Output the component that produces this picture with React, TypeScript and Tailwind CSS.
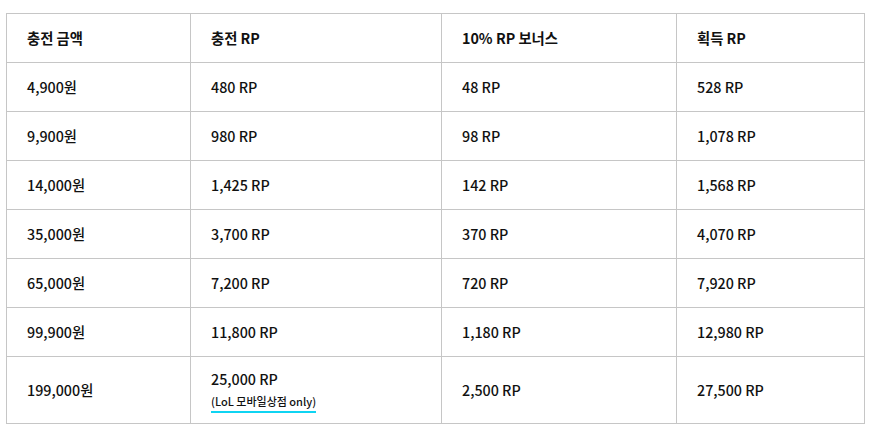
import React from 'react';

const rows: [string, string, string, string][] = [
  ['4,900원', '480 RP', '48 RP', '528 RP'],
  ['9,900원', '980 RP', '98 RP', '1,078 RP'],
  ['14,000원', '1,425 RP', '142 RP', '1,568 RP'],
  ['35,000원', '3,700 RP', '370 RP', '4,070 RP'],
  ['65,000원', '7,200 RP', '720 RP', '7,920 RP'],
  ['99,900원', '11,800 RP', '1,180 RP', '12,980 RP'],
];

const cell = 'border border-[#c6c6c6] pl-[20px] pr-2 text-left align-middle';

export default function App() {
  return (
    <div className="w-[870px] h-[431px] bg-white pt-[13px] pl-[6px] font-['Noto_Sans_CJK_KR','Noto_Sans',sans-serif] text-[14.3px] font-medium text-[#111]">
      <table className="w-[858px] border-collapse table-fixed">
        <colgroup>
          <col className="w-[184px]" />
          <col className="w-[251px]" />
          <col className="w-[235px]" />
          <col className="w-[188px]" />
        </colgroup>
        <thead>
          <tr className="h-[49px]">
            <th className={`${cell} font-bold`}>충전 금액</th>
            <th className={`${cell} font-bold`}>충전 RP</th>
            <th className={`${cell} font-bold`}>10% RP 보너스</th>
            <th className={`${cell} font-bold`}>획득 RP</th>
          </tr>
        </thead>
        <tbody>
          {rows.map((r) => (
            <tr key={r[0]} className="h-[49px]">
              {r.map((v, i) => (
                <td key={i} className={cell}>{v}</td>
              ))}
            </tr>
          ))}
          <tr className="h-[67px]">
            <td className={cell}>199,000원</td>
            <td className={cell}>
              <div className="leading-[20px] pt-[2px]">25,000 RP</div>
              <span className="inline-block text-[11px] font-medium leading-[16px] border-b-2 border-[#0fd4f2] pb-[2px]">
                (LoL 모바일상점 only)
              </span>
            </td>
            <td className={cell}>2,500 RP</td>
            <td className={cell}>27,500 RP</td>
          </tr>
        </tbody>
      </table>
    </div>
  );
}
